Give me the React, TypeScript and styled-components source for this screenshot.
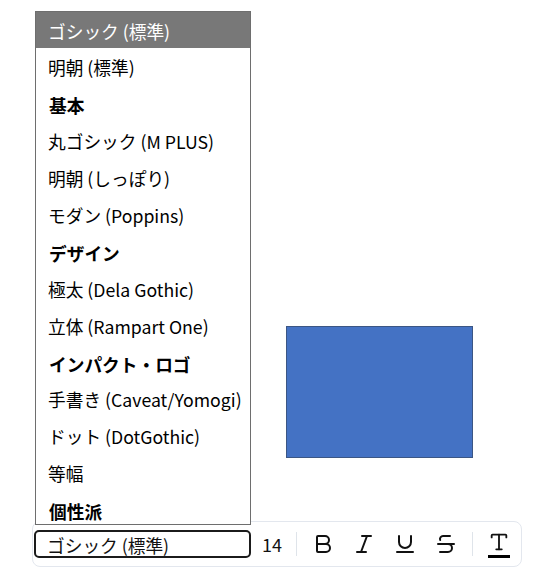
import React, { useState } from "react";
import styled, { createGlobalStyle } from "styled-components";
import { Bold, Italic, Underline, Strikethrough, Type } from "lucide-react";

const GlobalStyle = createGlobalStyle`
  html, body {
    margin: 0;
    padding: 0;
    background: #fff;
  }
  body {
    font-family: "Noto Sans CJK JP", sans-serif;
  }
`;

const Page = styled.div`
  display: flex;
  flex-direction: column;
  width: 554px;
  height: 585px;
`;

const Canvas = styled.div`
  position: relative;
  flex: 1;
`;

const Shape = styled.div`
  position: absolute;
  left: 286px;
  top: 326px;
  width: 187px;
  height: 132px;
  box-sizing: border-box;
  background: #4472c4;
  border: 1px solid #3b5684;
`;

const Dock = styled.div`
  display: flex;
  padding: 0 0 18px 32px;
`;

const Toolbar = styled.div`
  display: flex;
  align-items: center;
  gap: 5px;
  padding: 8px 4px 8px 1px;
  border: 1px solid #e3e7ee;
  border-radius: 8px;
  background: #fff;
`;

const SelectWrap = styled.div`
  position: relative;
  display: flex;
`;

const FontSelect = styled.select`
  appearance: none;
  -webkit-appearance: none;
  box-sizing: border-box;
  width: 217px;
  height: 28px;
  padding: 0 0 0 11px;
  border: 2px solid #1b1b1b;
  border-radius: 5px;
  background: #fff;
  color: #111;
  font-family: inherit;
  font-size: 17.7px;
  outline: none;
`;

const Listbox = styled.div`
  position: absolute;
  left: 1px;
  bottom: calc(100% + 5px);
  z-index: 10;
  box-sizing: border-box;
  width: 216px;
  height: 514px;
  overflow: hidden;
  border: 1px solid #6e6e6e;
  background: #fff;
`;

const Row = styled.div<{ $kind: "selected" | "option" | "group" }>`
  display: flex;
  align-items: center;
  box-sizing: border-box;
  height: ${(p) => (p.$kind === "selected" ? "36px" : "36.9px")};
  padding: ${(p) => (p.$kind === "group" ? "4px" : "2px")} 0 0
    ${(p) => (p.$kind === "group" ? "13px" : "12px")};
  font-size: 17.7px;
  white-space: nowrap;
  font-weight: ${(p) => (p.$kind === "group" ? 700 : 400)};
  color: ${(p) => (p.$kind === "selected" ? "#fff" : "#000")};
  background: ${(p) => (p.$kind === "selected" ? "#787878" : "transparent")};
`;

const SizeInput = styled.input`
  box-sizing: border-box;
  width: 32px;
  height: 28px;
  padding: 0 0 0 6px;
  border: none;
  outline: none;
  background: transparent;
  color: #111;
  font-family: inherit;
  font-size: 18px;
`;

const Divider = styled.div`
  width: 1px;
  height: 24px;
  margin: 0 3px;
  background: #dfe4ea;
`;

const IconButton = styled.button`
  display: flex;
  flex-direction: column;
  align-items: center;
  justify-content: center;
  width: 36px;
  height: 28px;
  padding: 0;
  border: none;
  background: none;
  color: #111;
  cursor: pointer;
`;

const ColorBar = styled.span<{ $color: string }>`
  display: block;
  width: 22px;
  height: 3px;
  margin-top: 2px;
  background: ${(p) => p.$color};
`;

type Entry = { label: string; kind: "selected" | "option" | "group" };

const entries: Entry[] = [
  { label: "ゴシック (標準)", kind: "selected" },
  { label: "明朝 (標準)", kind: "option" },
  { label: "基本", kind: "group" },
  { label: "丸ゴシック (M PLUS)", kind: "option" },
  { label: "明朝 (しっぽり)", kind: "option" },
  { label: "モダン (Poppins)", kind: "option" },
  { label: "デザイン", kind: "group" },
  { label: "極太 (Dela Gothic)", kind: "option" },
  { label: "立体 (Rampart One)", kind: "option" },
  { label: "インパクト・ロゴ", kind: "group" },
  { label: "手書き (Caveat/Yomogi)", kind: "option" },
  { label: "ドット (DotGothic)", kind: "option" },
  { label: "等幅", kind: "option" },
  { label: "個性派", kind: "group" },
];

const App = () => {
  const [font, setFont] = useState("ゴシック (標準)");
  const [size, setSize] = useState("14");

  return (
    <>
      <GlobalStyle />
      <Page>
        <Canvas>
          <Shape />
        </Canvas>
        <Dock>
          <Toolbar>
            <SelectWrap>
              <FontSelect value={font} onChange={(e) => setFont(e.target.value)}>
                {entries
                  .filter((e) => e.kind !== "group")
                  .map((e) => (
                    <option key={e.label} value={e.label}>
                      {e.label}
                    </option>
                  ))}
              </FontSelect>
              <Listbox role="listbox">
                {entries.map((e) => (
                  <Row key={e.label} $kind={e.kind}>
                    {e.label}
                  </Row>
                ))}
              </Listbox>
            </SelectWrap>
            <SizeInput value={size} onChange={(e) => setSize(e.target.value)} />
            <Divider />
            <IconButton title="太字">
              <Bold size={24} />
            </IconButton>
            <IconButton title="斜体">
              <Italic size={24} />
            </IconButton>
            <IconButton title="下線">
              <Underline size={24} />
            </IconButton>
            <IconButton title="取り消し線">
              <Strikethrough size={24} />
            </IconButton>
            <Divider />
            <IconButton title="文字色">
              <Type size={22} />
              <ColorBar $color="#000" />
            </IconButton>
          </Toolbar>
        </Dock>
      </Page>
    </>
  );
};

export default App;
